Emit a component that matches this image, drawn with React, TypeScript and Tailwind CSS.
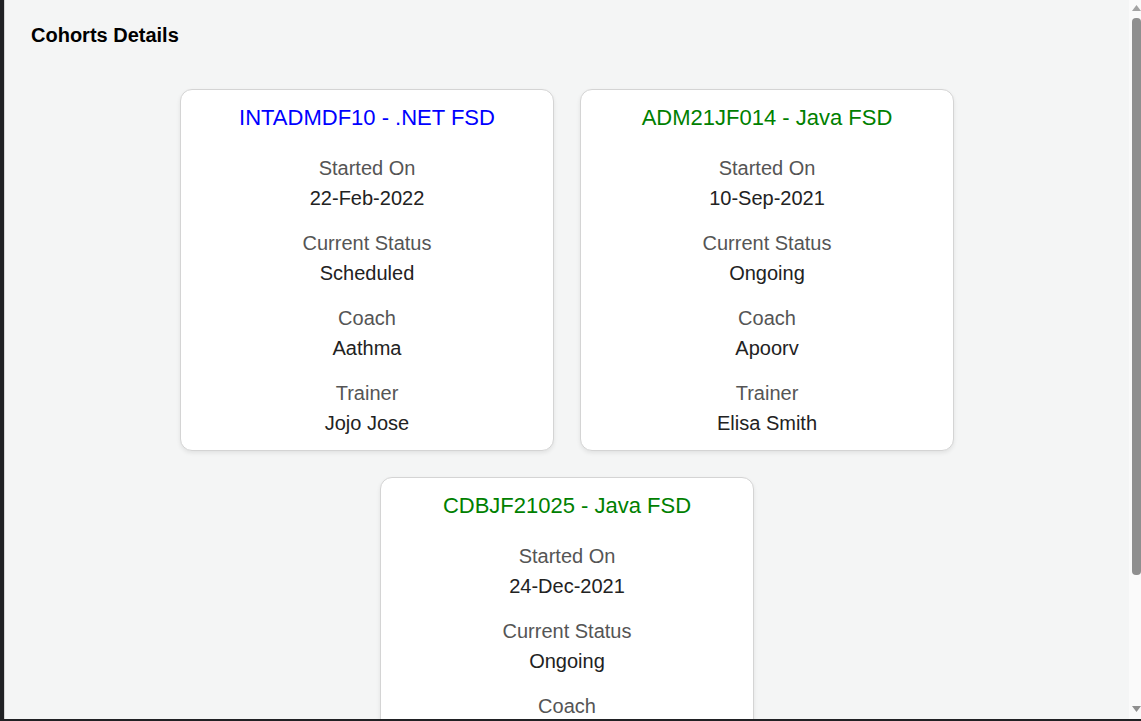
const cohorts = [
  {
    title: 'INTADMDF10 - .NET FSD',
    color: 'text-[#0000ff]',
    started: '22-Feb-2022',
    status: 'Scheduled',
    coach: 'Aathma',
    trainer: 'Jojo Jose',
  },
  {
    title: 'ADM21JF014 - Java FSD',
    color: 'text-[#008000]',
    started: '10-Sep-2021',
    status: 'Ongoing',
    coach: 'Apoorv',
    trainer: 'Elisa Smith',
  },
  {
    title: 'CDBJF21025 - Java FSD',
    color: 'text-[#008000]',
    started: '24-Dec-2021',
    status: 'Ongoing',
    coach: 'Apoorv',
    trainer: 'Jojo Jose',
  },
];

function Field({ label, value }: { label: string; value: string }) {
  return (
    <div>
      <div className="text-[20px] leading-[30px] text-[#555555]">{label}</div>
      <div className="text-[20px] leading-[30px] text-[#222222]">{value}</div>
    </div>
  );
}

function CohortCard({ cohort }: { cohort: (typeof cohorts)[number] }) {
  return (
    <div className="w-[374px] rounded-[12px] border border-[#d4d4d4] bg-white pt-[13px] pb-[12px] text-center shadow-[0_2px_4px_rgba(0,0,0,0.08)]">
      <h3 className={`mb-[20px] text-[22px] leading-[30px] ${cohort.color}`}>{cohort.title}</h3>
      <div className="flex flex-col gap-[15px]">
        <Field label="Started On" value={cohort.started} />
        <Field label="Current Status" value={cohort.status} />
        <Field label="Coach" value={cohort.coach} />
        <Field label="Trainer" value={cohort.trainer} />
      </div>
    </div>
  );
}

export default function App() {
  return (
    <div
      className="flex h-[721px] w-[1141px] flex-col overflow-hidden bg-[#202124] pb-[2px] pl-[4px]"
      style={{ fontFamily: '"Liberation Sans", Arial, sans-serif' }}
    >
      <div className="flex min-h-0 flex-1 border-l border-[#d4d4d4]">
        <main className="min-w-0 flex-1 overflow-hidden bg-[#f4f5f5] px-[26px] pt-[23px]">
          <h2 className="mb-[42px] text-[20px] font-bold leading-[24px] text-black">Cohorts Details</h2>
          <div className="flex flex-wrap justify-center gap-[26px]">
            {cohorts.map((c) => (
              <CohortCard key={c.title} cohort={c} />
            ))}
          </div>
        </main>
        <div className="flex w-[12px] flex-col items-end bg-[#fafafa]">
          <svg className="mt-[5px] h-[6px] w-[9px]" viewBox="0 0 9 6">
            <polygon points="4.5,0 9,6 0,6" fill="#a3a3a3" />
          </svg>
          <div className="mt-[7px] h-[557px] w-[9px] rounded-[4px] bg-[#8f8f8f]" />
          <div className="flex-1" />
          <svg className="mb-[7px] h-[6px] w-[9px]" viewBox="0 0 9 6">
            <polygon points="0,0 9,0 4.5,6" fill="#8f8f8f" />
          </svg>
        </div>
      </div>
    </div>
  );
}
